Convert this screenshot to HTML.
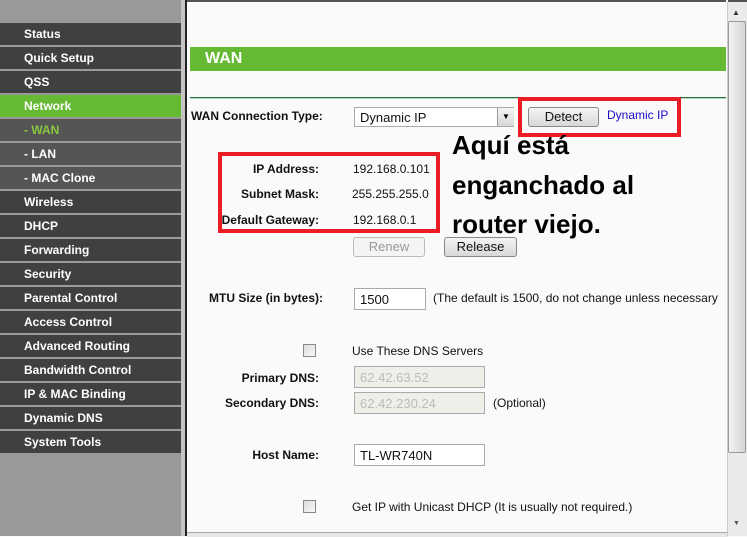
<!DOCTYPE html>
<html><head><meta charset="utf-8"><style>
body{margin:0;width:747px;height:536px;overflow:hidden;background:#fafafa;font-family:"Liberation Sans",Arial,sans-serif;position:relative}
.a{position:absolute}
.side{left:0;top:0;width:181px;height:536px;background:#999}
.m{position:absolute;left:0;width:181px;height:22px;background:#404040;color:#fff;font-weight:bold;font-size:12px;line-height:22px;text-indent:24px}
.m.s{background:#555}
.m.g{background:#66b933}
.lbl{position:absolute;font-size:12px;font-weight:bold;color:#111;text-align:right;width:150px}
.t{position:absolute;font-size:12px;color:#111}
.inp{position:absolute;height:19px;border:1px solid #aaa;background:#fff;font-size:12px;line-height:19px;padding-left:5px;box-sizing:border-box;color:#111}
.dis{background:#efefea;color:#bbb}
.btn{position:absolute;height:20px;border:1px solid #888;border-radius:3px;background:linear-gradient(#f4f4f4,#d8d8d8);font-size:13px;text-align:center;line-height:18px;box-sizing:border-box;color:#111}
.cb{position:absolute;width:11px;height:11px;border:1px solid #888;background:linear-gradient(135deg,#ddd,#f8f8f8)}
.red{position:absolute;border:4px solid #ec1c24;box-sizing:border-box}
.big{position:absolute;left:452px;font-size:26px;font-weight:bold;color:#000;line-height:35px}
</style></head><body>
<div class="a" style="left:0;top:0;width:747px;height:2px;background:#555"></div>
<div class="a side"></div>
<div class="a" style="left:181px;top:0;width:4px;height:536px;background:#c4c4c4"></div>
<div class="a" style="left:185px;top:0;width:2px;height:536px;background:#222"></div>
<div class="m" style="top:23px">Status</div>
<div class="m" style="top:47px">Quick Setup</div>
<div class="m" style="top:71px">QSS</div>
<div class="m g" style="top:95px">Network</div>
<div class="m s" style="top:119px;color:#8cc63f">- WAN</div>
<div class="m s" style="top:143px">- LAN</div>
<div class="m s" style="top:167px">- MAC Clone</div>
<div class="m" style="top:191px">Wireless</div>
<div class="m" style="top:215px">DHCP</div>
<div class="m" style="top:239px">Forwarding</div>
<div class="m" style="top:263px">Security</div>
<div class="m" style="top:287px">Parental Control</div>
<div class="m" style="top:311px">Access Control</div>
<div class="m" style="top:335px">Advanced Routing</div>
<div class="m" style="top:359px">Bandwidth Control</div>
<div class="m" style="top:383px">IP &amp; MAC Binding</div>
<div class="m" style="top:407px">Dynamic DNS</div>
<div class="m" style="top:431px">System Tools</div>

<div class="a" style="left:190px;top:47px;width:536px;height:24px;background:#66b933;color:#fff;font-weight:bold;font-size:16px;line-height:24px;text-indent:15px">WAN</div>
<div class="a" style="left:190px;top:97px;width:536px;height:1px;background:#2d6a3a"></div>
<div class="a" style="left:190px;top:98px;width:536px;height:1px;background:#b5dcb8"></div>

<div class="t" style="left:191px;top:109px;font-weight:bold">WAN Connection Type:</div>
<div class="inp" style="left:354px;top:107px;width:160px;height:20px;font-size:13px">Dynamic IP</div>
<div class="a" style="left:497px;top:108px;width:16px;height:18px;background:linear-gradient(#f4f4f4,#d8d8d8);border-left:1px solid #999;font-size:8px;text-align:center;line-height:18px">▼</div>
<div class="btn" style="left:528px;top:107px;width:71px;height:20px">Detect</div>
<div class="t" style="left:607px;top:108px;color:#1a0dcc">Dynamic IP</div>
<div class="red" style="left:518px;top:97px;width:163px;height:40px"></div>

<div class="lbl" style="left:169px;top:162px">IP Address:</div>
<div class="lbl" style="left:169px;top:187px">Subnet Mask:</div>
<div class="lbl" style="left:169px;top:213px">Default Gateway:</div>
<div class="t" style="left:353px;top:162px">192.168.0.101</div>
<div class="t" style="left:352px;top:187px">255.255.255.0</div>
<div class="t" style="left:353px;top:213px">192.168.0.1</div>
<div class="red" style="left:218px;top:152px;width:222px;height:81px"></div>
<div class="big" style="top:128px">Aquí está</div>
<div class="big" style="top:168px">enganchado al</div>
<div class="big" style="top:207px">router viejo.</div>

<div class="btn" style="left:353px;top:237px;width:72px;color:#999;border-color:#bbb;background:#f4f4f4">Renew</div>
<div class="btn" style="left:444px;top:237px;width:73px">Release</div>

<div class="lbl" style="left:195px;top:291px;width:150px;text-align:left;left:209px">MTU Size (in bytes):</div>
<div class="inp" style="left:354px;top:288px;width:72px;height:22px;font-size:13px;line-height:21px">1500</div>
<div class="t" style="left:433px;top:291px;white-space:nowrap">(The default is 1500, do not change unless necessary</div>
<div class="a" style="left:726px;top:0;width:2px;height:536px;background:#fafafa"></div>

<div class="cb" style="left:303px;top:344px"></div>
<div class="t" style="left:352px;top:344px">Use These DNS Servers</div>
<div class="lbl" style="left:169px;top:371px">Primary DNS:</div>
<div class="inp dis" style="left:354px;top:366px;width:131px;height:22px;font-size:13px;line-height:21px">62.42.63.52</div>
<div class="lbl" style="left:169px;top:396px">Secondary DNS:</div>
<div class="inp dis" style="left:354px;top:392px;width:131px;height:22px;font-size:13px;line-height:21px">62.42.230.24</div>
<div class="t" style="left:493px;top:396px">(Optional)</div>

<div class="lbl" style="left:169px;top:448px">Host Name:</div>
<div class="inp" style="left:354px;top:444px;width:131px;height:22px;font-size:13px;line-height:21px">TL-WR740N</div>
<div class="cb" style="left:303px;top:500px"></div>
<div class="t" style="left:352px;top:500px">Get IP with Unicast DHCP (It is usually not required.)</div>

<div class="a" style="left:187px;top:532px;width:541px;height:4px;background:#e6e6e6;border-top:1px solid #aaa"></div>

<div class="a" style="left:727px;top:2px;width:20px;height:534px;background:#eaeaea;border-left:1px solid #ccc"></div>
<div class="a" style="left:732px;top:8px;font-size:8px;color:#333">▲</div>
<div class="a" style="left:728px;top:21px;width:16px;height:430px;border:1px solid #999;border-radius:2px;background:linear-gradient(90deg,#f2f2f2,#d6d6d6)"></div>
<div class="a" style="left:733px;top:520px;font-size:7px;color:#555">▼</div>
</body></html>
